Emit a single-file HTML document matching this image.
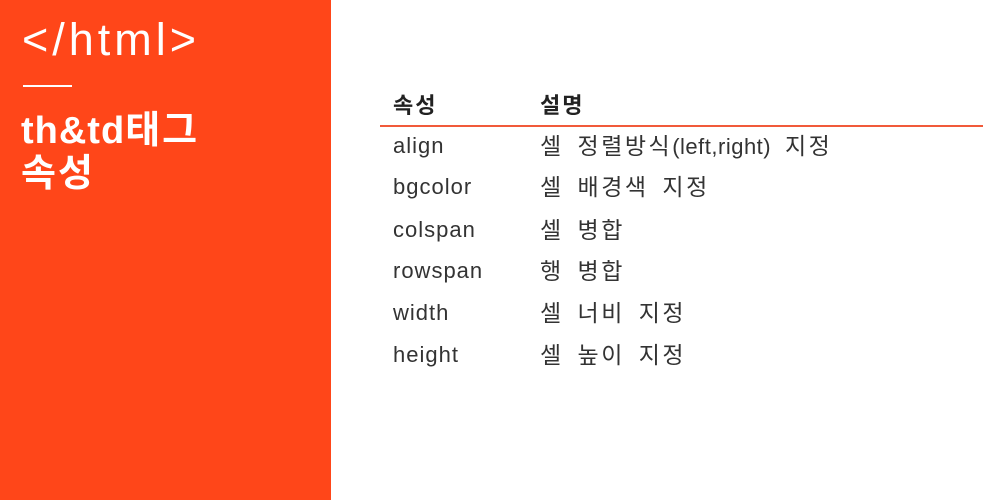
<!DOCTYPE html>
<html><head><meta charset="utf-8"><style>
body{margin:0;width:1000px;height:500px;position:relative;background:#fff;font-family:"Liberation Sans","Noto Sans CJK KR",sans-serif;overflow:hidden}
.side{position:absolute;left:0;top:0;width:331px;height:500px;background:#ff4619}
.t1{position:absolute;left:22px;top:14px;color:#fff;font-size:45px;font-weight:300;letter-spacing:4px;line-height:52px}
.bar{position:absolute;left:23px;top:85px;width:49px;height:2px;background:#fff}
.t2{position:absolute;left:21px;top:110px;color:#fff;font-size:38px;font-weight:bold;line-height:43px;letter-spacing:1px}
.t2 .k{font-size:38px;letter-spacing:2px}
.r{position:absolute;font-size:23px;color:#333;line-height:24px;letter-spacing:2.5px;word-spacing:5px;white-space:nowrap}
.r .e{font-size:22px;letter-spacing:0.5px}
.l{font-size:22px;letter-spacing:1px}
.h{font-weight:bold;font-size:22px;color:#222;letter-spacing:2px}
.line{position:absolute;left:380px;top:125px;width:603px;height:2px;background:#f15a3a}
</style></head><body>
<div class="side"><div class="t1">&lt;/html&gt;</div><div class="bar"></div><div class="t2">th&amp;td<span class="k">태그</span><br><span class="k">속성</span></div></div>
<div class="r h" style="left:393px;top:94px">속성</div><div class="r h" style="left:540px;top:94px">설명</div>
<div class="line"></div>
<div class="r l" style="left:393px;top:134px">align</div><div class="r" style="left:540px;top:134px">셀 정렬방식<span class="e">(left,right)</span> 지정</div>
<div class="r l" style="left:393px;top:175px">bgcolor</div><div class="r" style="left:540px;top:175px">셀 배경색 지정</div>
<div class="r l" style="left:393px;top:218px">colspan</div><div class="r" style="left:540px;top:218px">셀 병합</div>
<div class="r l" style="left:393px;top:259px">rowspan</div><div class="r" style="left:540px;top:259px">행 병합</div>
<div class="r l" style="left:393px;top:301px">width</div><div class="r" style="left:540px;top:301px">셀 너비 지정</div>
<div class="r l" style="left:393px;top:343px">height</div><div class="r" style="left:540px;top:343px">셀 높이 지정</div>
</body></html>
